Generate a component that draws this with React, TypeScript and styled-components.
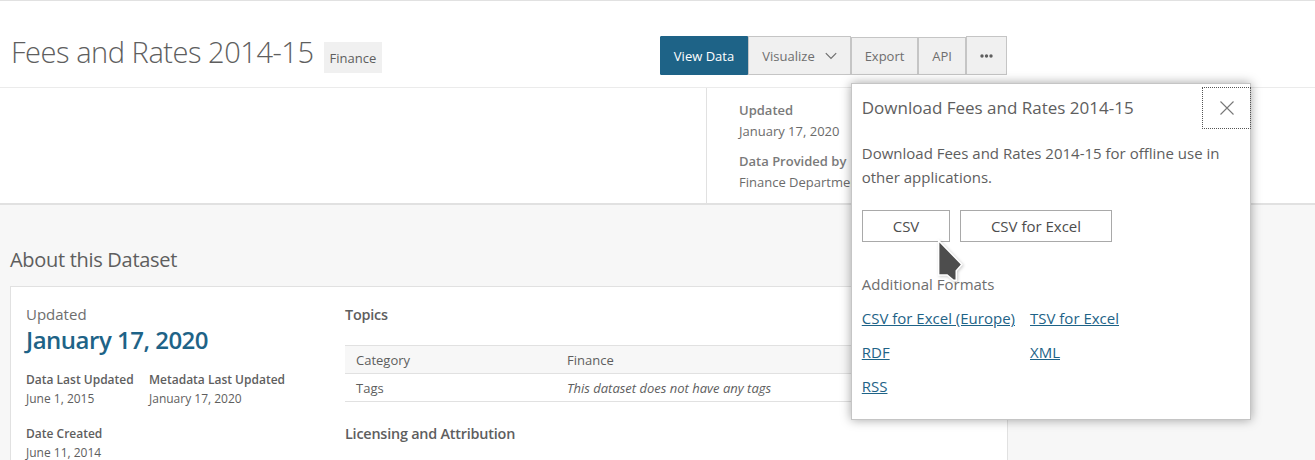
import React from "react";
import styled, { createGlobalStyle } from "styled-components";

const GlobalStyle = createGlobalStyle`
  *, *::before, *::after { box-sizing: border-box; }
  body {
    margin: 0;
    background: #f7f7f7;
    color: #5e5e5e;
    font-family: "Open Sans", "Noto Sans", sans-serif;
    overflow: hidden;
  }
  h1, h2, h3, p, dl, dt, dd { margin: 0; font-weight: 400; }
  button { font-family: inherit; margin: 0; }
`;

const Page = styled.div`
  height: 460px;
  overflow: hidden;
`;

const TitleBar = styled.header`
  display: flex;
  align-items: flex-start;
  height: 88px;
  padding-left: 11px;
  background: #fff;
  border-top: 1px solid #e1e1e1;
  border-bottom: 1px solid #ebebeb;
`;

const Heading = styled.div`
  display: flex;
  width: 649px;
  padding-top: 31px;
`;

const Title = styled.h1`
  width: 302px;
  font-size: 29px;
  line-height: 40px;
  font-weight: 300;
  letter-spacing: -0.46px;
  white-space: nowrap;
`;

const CategoryTag = styled.span`
  height: 31px;
  width: 58px;
  margin: 10px 0 0 11px;
  padding: 0 5.5px;
  background: #f0f0f0;
  font-size: 13px;
  line-height: 32px;
`;

const Actions = styled.div`
  position: relative;
  display: flex;
  align-items: flex-end;
  height: 39px;
  margin-top: 35px;
`;

const ActionButton = styled.button<{ $width: number; $primary?: boolean; $short?: boolean }>`
  display: flex;
  align-items: center;
  justify-content: center;
  width: ${(p) => p.$width}px;
  height: ${(p) => (p.$short ? 38 : 39)}px;
  padding: ${(p) => (p.$short ? "0" : "1px 0 0")};
  border: 1px solid ${(p) => (p.$primary ? "#1e6387" : "#c5c5c5")};
  border-radius: ${(p) => (p.$primary ? "1px 0 0 1px" : "0")};
  background: ${(p) => (p.$primary ? "#1e6387" : "#f0f0f0")};
  color: ${(p) => (p.$primary ? "#fff" : "#6e6e6e")};
  font-size: 13px;
  line-height: 18px;
  gap: 10px;
`;

const Summary = styled.section`
  display: flex;
  height: 117px;
  background: #fff;
  border-bottom: 2px solid #e1e1e1;
`;

const Description = styled.div`
  width: 706px;
`;

const SummaryFacts = styled.dl`
  width: 301px;
  padding: 12px 0 0 32px;
  border-left: 1px solid #e1e1e1;
  color: #6b6b6b;
  font-size: 13px;
  line-height: 21px;
  white-space: nowrap;
  dt { font-weight: 600; color: #7a7a7a; }
  dd { margin-bottom: 9px; }
`;

const About = styled.main`
  padding: 41px 0 0 10px;
`;

const AboutTitle = styled.h2`
  font-size: 20px;
  line-height: 27px;
  letter-spacing: -0.3px;
`;

const Card = styled.section`
  display: flex;
  width: 998px;
  height: 240px;
  margin-top: 13px;
  padding: 0 15px;
  background: #fff;
  border: 1px solid #e1e1e1;
`;

const Dates = styled.div`
  width: 319px;
  padding-top: 17px;
`;

const UpdatedLabel = styled.div`
  font-size: 15px;
  line-height: 21px;
  color: #6e6e6e;
`;

const UpdatedDate = styled.div`
  font-size: 24px;
  line-height: 30px;
  font-weight: 600;
  letter-spacing: -0.5px;
  color: #1e6387;
`;

const DateGrid = styled.dl`
  display: grid;
  grid-template-columns: 123px 1fr;
  row-gap: 16px;
  margin-top: 15px;
  font-size: 12px;
  line-height: 19px;
  dt { font-weight: 600; }
`;

const Details = styled.div`
  flex: 1;
  padding-top: 17px;
`;

const SectionTitle = styled.h3`
  font-size: 14.4px;
  line-height: 21px;
  font-weight: 600;
  letter-spacing: -0.21px;
`;

const Facts = styled.dl`
  margin: 20px 0 21px;
  border-top: 1px solid #e1e1e1;
`;

const FactRow = styled.div<{ $shaded?: boolean }>`
  display: grid;
  grid-template-columns: 211px 1fr;
  height: 28px;
  padding-left: 11px;
  border-bottom: 1px solid #e1e1e1;
  background: ${(p) => (p.$shaded ? "#f7f7f7" : "#fff")};
  font-size: 13px;
  line-height: 28px;
`;

const Popover = styled.div`
  position: absolute;
  z-index: 2;
  top: 47px;
  left: 191px;
  width: 400px;
  height: 337px;
  padding: 0 10px 0 9.75px;
  background: #fff;
  border: 1px solid #c5c5c5;
  box-shadow: 0 0 10px rgba(0, 0, 0, 0.36);
  font-size: 15px;
`;

const PopoverHeader = styled.div`
  display: flex;
  justify-content: space-between;
  height: 57px;
  margin-right: -11px;
  padding-top: 3px;
`;

const PopoverTitle = styled.h2`
  font-size: 17px;
  line-height: 42px;
`;

const CloseButton = styled.button`
  display: flex;
  align-items: center;
  justify-content: center;
  width: 49px;
  height: 42px;
  padding: 0 0 1px;
  border: 1px dotted #555;
  background: none;
`;

const PopoverText = styled.p`
  line-height: 24px;
`;

const Downloads = styled.div`
  position: relative;
  display: flex;
  gap: 10px;
  margin-top: 21px;
`;

const DownloadButton = styled.button<{ $width: number }>`
  width: ${(p) => p.$width}px;
  height: 32px;
  padding: 0 0 0 0.5px;
  border: 1px solid #a9a9a9;
  background: #fff;
  color: #4d4d4d;
  font-size: 15px;
`;

const FormatsLabel = styled.div`
  position: relative;
  margin-top: 30px;
  line-height: 24px;
  color: #6e6e6e;
`;

const Formats = styled.div`
  display: grid;
  grid-template-columns: 168.25px 1fr;
  margin-top: 5px;
  line-height: 34px;
`;

const FormatLink = styled.a`
  justify-self: start;
  color: #1e6387;
  text-decoration: underline;
  white-space: nowrap;
`;

const Pointer = styled.svg`
  position: absolute;
  top: 28px;
  left: 74px;
  overflow: visible;
  filter: drop-shadow(1px 1px 1.5px rgba(0, 0, 0, 0.2));
`;

export default function App() {
  return (
    <Page>
      <GlobalStyle />
      <TitleBar>
        <Heading>
          <Title>Fees and Rates 2014-15</Title>
          <CategoryTag>Finance</CategoryTag>
        </Heading>
        <Actions>
          <ActionButton $width={88} $primary>View Data</ActionButton>
          <ActionButton $width={103}>
            Visualize
            <svg width="12" height="8" viewBox="0 0 12 8" fill="none" stroke="#6e6e6e" strokeWidth="1.2">
              <path d="M.8 1.2 6 6.4l5.2-5.2" />
            </svg>
          </ActionButton>
          <ActionButton $width={67} $short>Export</ActionButton>
          <ActionButton $width={48} $short>API</ActionButton>
          <ActionButton $width={41}>
            <svg width="13" height="4" viewBox="0 0 13 4" fill="#5e5e5e">
              <circle cx="2" cy="2" r="1.7" />
              <circle cx="6.5" cy="2" r="1.7" />
              <circle cx="11" cy="2" r="1.7" />
            </svg>
          </ActionButton>
          <Popover>
            <PopoverHeader>
              <PopoverTitle>Download Fees and Rates 2014-15</PopoverTitle>
              <CloseButton aria-label="Close">
                <svg width="14" height="14" viewBox="0 0 14 14" stroke="#777" strokeWidth="1.1">
                  <path d="M.5.5l13 13M13.5.5l-13 13" />
                </svg>
              </CloseButton>
            </PopoverHeader>
            <PopoverText>Download Fees and Rates 2014-15 for offline use in other applications.</PopoverText>
            <Downloads>
              <DownloadButton $width={88}>CSV</DownloadButton>
              <DownloadButton $width={152}>CSV for Excel</DownloadButton>
              <Pointer width="26" height="44" viewBox="0 0 26 44">
                <path
                  d="M3.4 4.5V36.2h8l6.3 5.3h1.8v-9l5.3-6z"
                  fill="none"
                  stroke="#fff"
                  strokeWidth="3"
                />
                <path d="M3.4 4.5V36.2h8l6.3 5.3h1.8v-9l5.3-6z" fill="#4d4d4d" />
              </Pointer>
            </Downloads>
            <FormatsLabel>Additional Formats</FormatsLabel>
            <Formats>
              <FormatLink>CSV for Excel (Europe)</FormatLink>
              <FormatLink>TSV for Excel</FormatLink>
              <FormatLink>RDF</FormatLink>
              <FormatLink>XML</FormatLink>
              <FormatLink>RSS</FormatLink>
            </Formats>
          </Popover>
        </Actions>
      </TitleBar>
      <Summary>
        <Description />
        <SummaryFacts>
          <dt>Updated</dt>
          <dd>January 17, 2020</dd>
          <dt>Data Provided by</dt>
          <dd>Finance Department</dd>
        </SummaryFacts>
      </Summary>
      <About>
        <AboutTitle>About this Dataset</AboutTitle>
        <Card>
          <Dates>
            <UpdatedLabel>Updated</UpdatedLabel>
            <UpdatedDate>January 17, 2020</UpdatedDate>
            <DateGrid>
              <div>
                <dt>Data Last Updated</dt>
                <dd>June 1, 2015</dd>
              </div>
              <div>
                <dt>Metadata Last Updated</dt>
                <dd>January 17, 2020</dd>
              </div>
              <div>
                <dt>Date Created</dt>
                <dd>June 11, 2014</dd>
              </div>
            </DateGrid>
          </Dates>
          <Details>
            <SectionTitle>Topics</SectionTitle>
            <Facts>
              <FactRow $shaded>
                <dt>Category</dt>
                <dd>Finance</dd>
              </FactRow>
              <FactRow>
                <dt>Tags</dt>
                <dd><em>This dataset does not have any tags</em></dd>
              </FactRow>
            </Facts>
            <SectionTitle>Licensing and Attribution</SectionTitle>
          </Details>
        </Card>
      </About>
    </Page>
  );
}
